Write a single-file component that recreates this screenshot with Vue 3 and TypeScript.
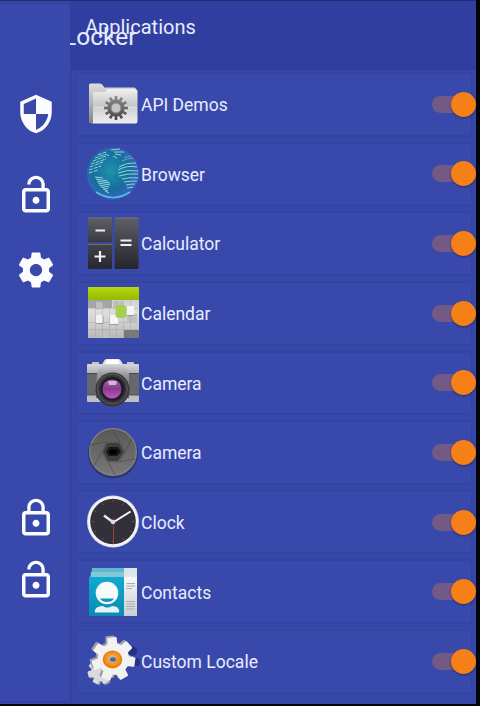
<template>
  <div class="screen">
    <aside class="drawer">
      <div class="drawer-group">
        <svg v-for="(icon, i) in topIcons" :key="i" class="drawer-icon" :class="icon.name" viewBox="0 0 24 24">
          <path :d="icon.path" />
        </svg>
      </div>
      <div class="drawer-group drawer-group-bottom">
        <svg v-for="(icon, i) in bottomIcons" :key="i" class="drawer-icon" :class="icon.name" viewBox="0 0 24 24">
          <path :d="icon.path" />
        </svg>
      </div>
    </aside>

    <main class="content">
      <header class="toolbar">
        <span class="title">Locker</span>
        <span class="subtitle">Applications</span>
      </header>

      <ul class="app-list">
        <li v-for="app in apps" :key="app.icon" class="app-row">
          <div class="card">
            <svg class="app-icon" viewBox="0 0 54 54">
              <g v-if="app.icon === 'folder'">
                <path d="M3 46V8q0-1.500 1.500-1.500H14q1.500 0 2.500 1.500l2 2.500H48q2 0 2 2V46Z" fill="url(#folderBack)" />
                <path d="M7 46V17q0-2 2-2h9q2 0 3-2l1-1h27q2.500 0 2.500 2.500V44.500q0 2-2 2H5Z" fill="url(#folderFront)" />
                <path d="M8 30.500H51" stroke="#fff" stroke-opacity=".35" />
                <path :d="gearPath(30, 31, 12, 8.5, 12)" fill="url(#darkGear)" />
                <circle cx="30" cy="31" r="5" fill="#c4c4c4" stroke="#888" />
              </g>

              <g v-else-if="app.icon === 'globe'">
                <circle cx="27" cy="26.500" r="26" fill="url(#globe)" />
                <g fill="none" stroke="#a9e0e8" stroke-width="1" stroke-opacity=".85">
                  <path d="M12 8l8-3M9 11l12-4M7 14l16-6M5 17l15-5M4 20l13-5M3 23l12-4M3 26l9-3" stroke-dasharray="4 1" />
                  <path d="M25 3l9-1M28 5l10 0M29 7l6 1M27 9l4 2" />
                  <path d="M33 20q8-5 17-4M32 23q9-5 19-3M32 26q9-4 20-2M33 29q9-3 19-2M36 32q8-2 16-1M38 35q6-1 13-1M40 38q5-1 9-1M41 41l6-1" />
                  <path d="M9 30l8 1M10 32l12 2M11 34l13 2M12 36l12 2M13 38l10 2M15 40l7 2M17 42l5 2M19 44l4 2" />
                  <path d="M36 14q6-3 11-3M38 11q4-2 7-2" stroke-opacity=".5" />
                </g>
                <path d="M10 45Q27 56 44 45" fill="none" stroke="#58bce8" stroke-width="1.500" />
              </g>

              <g v-else-if="app.icon === 'calculator'">
                <rect x="2" y=".5" width="24" height="25" rx="1" fill="url(#keyLight)" />
                <rect x="2" y="27" width="24" height="25" rx="1" fill="url(#keyDark)" />
                <rect x="28.500" y=".5" width="24" height="51.500" rx="1" fill="url(#keyTall)" />
                <path d="M2.500 1H25.500M2.500 27.500H25.500M29 1H52" stroke="#77777f" stroke-width=".8" />
                <path d="M9.500 13.500H19M8.500 39.500H19.500M14 34V45M34.500 23.500H45.500M34.500 28H45.500" stroke="#f1f1f1" stroke-width="2.200" />
              </g>

              <g v-else-if="app.icon === 'calendar'">
                <rect x="2" y="1" width="51" height="51" fill="url(#calendarPage)" />
                <path d="M2 14H26V22H2Z" fill="#a6a6a8" />
                <path d="M10 16h7v7h-7zM27 15h10v7H27zM41 28h10v8H41zM15 43h8v9h-8z" fill="#bfc0c0" />
                <path d="M38 44H53V52H38Z" fill="#777979" />
                <path d="M9.500 14V51M16.500 14V51M23.500 14V51M30.500 14V51M37.500 14V51M44.500 14V51M2 22.500H52M2 36.500H52M2 43.500H52" stroke="#8d8e8e" stroke-opacity=".4" stroke-width=".7" />
                <rect x="10" y="29" width="7" height="8" fill="#f3f4f2" />
                <path d="M24 29H32V38H24ZM41 20H48V29H41Z" fill="#f5f6f3" />
                <path d="M10 37.500h7v-8M24 38.500h8M41 29.500h7" fill="none" stroke="#8b8c8b" stroke-width=".8" />
                <rect x="29.500" y="19" width="11" height="13" rx="3" fill="#a5d052" />
                <rect x="2" y="1" width="51" height="13" fill="url(#calendarTop)" />
              </g>

              <g v-else-if="app.icon === 'camera'">
                <path d="M6 9V6h7v3M41 9V6h7v3" fill="#c6c6ca" />
                <rect x="1" y="8" width="52" height="38" rx="1" fill="url(#silver)" />
                <rect x="1" y="17" width="52" height="22" fill="#66666b" />
                <path d="M1 17.500H53M1 39H53" stroke="#3d3d42" stroke-width=".7" />
                <path d="M11 17L18 5q1-2 3-2H32q2 0 3 2L43 17V42H10Z" fill="url(#prism)" />
                <path d="M19 8L21 4H32L34 8Z" fill="#fff" />
                <ellipse cx="26.500" cy="33.500" rx="17" ry="17" fill="#37363b" />
                <circle cx="26.500" cy="33" r="15" fill="none" stroke="#5f5d62" stroke-width="1" />
                <circle cx="26.500" cy="33" r="12" fill="#1f1b25" />
                <circle cx="26" cy="33" r="9.500" fill="url(#lens)" />
                <path d="M22 25H31L30 29H23Z" fill="#e5c2e9" opacity=".85" />
              </g>

              <g v-else-if="app.icon === 'shutter'">
                <circle cx="27" cy="27.500" r="25" fill="#282c50" opacity=".65" />
                <circle cx="27" cy="26" r="24" fill="#838483" />
                <circle cx="27" cy="26" r="22.800" fill="url(#shutter)" />
                <path d="M20 16L34 16L39 26L33 36H22L16 26ZM20 16L4 19M34 16L26 3M39 26L46 12M33 36L49 33M22 36L29 49M16 26L8 40" fill="none" stroke="#4b4b4b" stroke-width=".7" />
                <path d="M21 17H33L38 26L32 35H22L17 26Z" fill="#3e3e3e" />
                <path d="M23 21H32L35 26L31 30H23L20 26Z" fill="#161616" />
                <ellipse cx="27" cy="26" rx="4" ry="2.500" fill="#000" />
              </g>

              <g v-else-if="app.icon === 'clock'">
                <circle cx="27" cy="26.500" r="26" fill="#dadfe9" />
                <circle cx="27" cy="26.500" r="25" fill="#f4f5fc" />
                <circle cx="27" cy="26.500" r="22.800" fill="#343039" />
                <path d="M27 5v2M27 46v2M6 26.500h2M46 26.500h2M16.500 8.500l1 1.700M8.500 16l1.700 1M8.500 37l1.700-1M16.500 44.500l1-1.700M37.500 44.500l-1-1.700M45.500 37l-1.700-1M37.500 8.500l-1 1.700" stroke="#68636b" stroke-width=".8" />
                <path d="M27.500 23V49" stroke="#9b4036" stroke-width="1" />
                <path d="M27 27.500L44.500 16.500" stroke="#fff" stroke-width="2" />
                <path d="M27.500 27.500L18 20.500" stroke="#e7e7e9" stroke-width="2.600" />
                <circle cx="27" cy="27" r="2.300" fill="#d9d9db" />
              </g>

              <g v-else-if="app.icon === 'contacts'">
                <path d="M6 3H51V12H5Z" fill="#5cb9d1" />
                <path d="M38 3H51V12H38Z" fill="#d7e4e8" />
                <path d="M5 7H51V15H4Z" fill="#83c8d8" />
                <path d="M38 7H51V15H38Z" fill="#e1e7e8" />
                <path d="M3 12H38V51H3Z" fill="url(#contactBlue)" />
                <path d="M38 12H51V51H38Z" fill="url(#contactPaper)" />
                <path d="M9 47.500Q8 41 17 41Q21 44 26 41Q34 41 33 47.500Z" fill="#e5f3f3" />
                <circle cx="21" cy="28" r="11.300" fill="#f5fafa" />
                <path d="M14 33.500H28Q26 37 21 37Q16 37 14 33.500Z" fill="#1398bd" />
                <path d="M40.500 18.500H49M40.500 21H49M40.500 23.500H46M40.500 36.500H49M40.500 39H49M40.500 41.500H49M40.500 44H49" stroke="#a5adb0" stroke-width="1" />
              </g>

              <g v-else>
                <ellipse cx="46" cy="17" rx="5" ry="5" fill="#202b70" opacity=".75" />
                <ellipse cx="51" cy="28" rx="3" ry="4" fill="#202b70" opacity=".75" />
                <g stroke-width="2" stroke-linejoin="round">
                  <path :d="gearPath(16, 38.5, 12, 8.5, 7, 0.2)" fill="#8f929b" stroke="#8f929b" />
                  <path :d="gearPath(14.5, 37.5, 12, 8.5, 7, 0.2)" fill="#dadadc" stroke="#dadadc" />
                  <path :d="gearPath(25.5, 23.5, 21, 15, 7, 0.15)" fill="#9c9ea6" stroke="#9c9ea6" />
                  <path :d="gearPath(27.5, 25, 21, 15, 7, 0.15)" fill="#f2f2f2" stroke="#f2f2f2" />
                </g>
                <ellipse cx="26.500" cy="25.500" rx="9.800" ry="9" fill="#ea7d0c" />
                <ellipse cx="26.500" cy="25" rx="8" ry="7" fill="#f4951d" />
                <ellipse cx="26.500" cy="25" rx="4.500" ry="4" fill="#c9b6a5" />
                <ellipse cx="27" cy="25.500" rx="3" ry="2.200" fill="#59648f" />
              </g>
            </svg>
            <span class="app-name">{{ app.name }}</span>
            <button class="switch" type="button" role="switch" :aria-checked="app.locked" :aria-label="app.name" :class="{ on: app.locked }" @click="app.locked = !app.locked">
              <span class="thumb" />
            </button>
          </div>
        </li>
      </ul>
    </main>

    <!-- Shared gradients for the launcher icons -->
    <svg class="defs" width="0" height="0">
      <defs>
        <linearGradient id="folderBack" x2="0" y2="1"><stop stop-color="#dedede" /><stop offset="1" stop-color="#858585" /></linearGradient>
        <linearGradient id="folderFront" x2="0" y2="1"><stop stop-color="#f0f0f0" /><stop offset=".45" stop-color="#c9c9c9" /><stop offset="1" stop-color="#eeeeee" /></linearGradient>
        <linearGradient id="darkGear" x2="0" y2="1"><stop stop-color="#8d8d8d" /><stop offset="1" stop-color="#454545" /></linearGradient>
        <radialGradient id="globe" cx=".45" cy=".45"><stop stop-color="#1d93ac" /><stop offset=".7" stop-color="#176f9b" /><stop offset="1" stop-color="#2e68b5" /></radialGradient>
        <linearGradient id="keyLight" x2="0" y2="1"><stop stop-color="#5f5f67" /><stop offset="1" stop-color="#393a40" /></linearGradient>
        <linearGradient id="keyDark" x2="0" y2="1"><stop stop-color="#43444a" /><stop offset="1" stop-color="#27282f" /></linearGradient>
        <linearGradient id="keyTall" x2="0" y2="1"><stop stop-color="#5f5f67" /><stop offset="1" stop-color="#25262d" /></linearGradient>
        <linearGradient id="calendarPage" x2="0" y2="1"><stop stop-color="#c3c4c5" /><stop offset=".5" stop-color="#dedfdd" /><stop offset="1" stop-color="#b8b9b8" /></linearGradient>
        <linearGradient id="calendarTop" x2="0" y2="1"><stop stop-color="#b8d80c" /><stop offset="1" stop-color="#94b900" /></linearGradient>
        <linearGradient id="silver" x2="0" y2="1"><stop stop-color="#d8d8dc" /><stop offset=".3" stop-color="#a5a5aa" /><stop offset="1" stop-color="#c1c1c5" /></linearGradient>
        <linearGradient id="prism" x2="0" y2="1"><stop stop-color="#f4f4f8" /><stop offset=".4" stop-color="#98989d" /><stop offset="1" stop-color="#5a5a5e" /></linearGradient>
        <linearGradient id="lens" x2="0" y2="1"><stop stop-color="#a463ac" /><stop offset=".5" stop-color="#893b91" /><stop offset="1" stop-color="#c258c1" /></linearGradient>
        <linearGradient id="shutter" x2="0" y2="1"><stop stop-color="#585957" /><stop offset="1" stop-color="#777877" /></linearGradient>
        <linearGradient id="contactBlue" x2="0" y2="1"><stop stop-color="#12a9cf" /><stop offset="1" stop-color="#078bb3" /></linearGradient>
        <linearGradient id="contactPaper" x2="0" y2="1"><stop stop-color="#f7f7f7" /><stop offset="1" stop-color="#c8ced2" /></linearGradient>
      </defs>
    </svg>
  </div>
</template>

<script setup lang="ts">
import { ref } from 'vue'

interface AppItem {
  name: string
  icon: string
  locked: boolean
}

interface DrawerIcon {
  name: string
  path: string
}

const lockOpen = 'M12 17c1.100 0 2-.9 2-2s-.9-2-2-2-2 .9-2 2 .9 2 2 2zm6-9h-1V6c0-2.760-2.240-5-5-5S7 3.240 7 6h1.900c0-1.710 1.390-3.100 3.100-3.100 1.710 0 3.100 1.390 3.100 3.100v2H6c-1.100 0-2 .9-2 2v10c0 1.100.9 2 2 2h12c1.100 0 2-.9 2-2V10c0-1.100-.9-2-2-2zm0 12H6V10h12v10z'

const topIcons: DrawerIcon[] = [
  { name: 'shield', path: 'M12 1L3 5v6c0 5.550 3.840 10.740 9 12 5.160-1.260 9-6.450 9-12V5l-9-4zm0 10.990h7c-.53 4.120-3.280 7.790-7 8.940V12H5V6.300l7-3.110v8.800z' },
  { name: 'lock-open', path: lockOpen },
  { name: 'settings', path: 'M19.430 12.980c.04-.32.07-.64.07-.98s-.03-.66-.07-.98l2.110-1.650c.19-.15.24-.42.12-.64l-2-3.460c-.12-.22-.39-.3-.61-.22l-2.490 1c-.52-.4-1.080-.73-1.690-.98l-.38-2.650C14.460 2.180 14.250 2 14 2h-4c-.25 0-.46.18-.49.42l-.38 2.650c-.61.25-1.170.59-1.690.98l-2.490-1c-.23-.09-.49 0-.61.22l-2 3.460c-.13.22-.07.49.12.64l2.110 1.650c-.04.32-.07.65-.07.98s.03.66.07.98l-2.110 1.650c-.19.15-.24.42-.12.64l2 3.460c.12.22.39.3.61.22l2.490-1c.52.4 1.080.73 1.690.98l.38 2.650c.03.24.24.42.49.42h4c.25 0 .46-.18.49-.42l.38-2.650c.61-.25 1.170-.59 1.690-.98l2.490 1c.23.09.49 0 .61-.22l2-3.460c.12-.22.07-.49-.12-.64l-2.110-1.650zM12 15.500c-1.930 0-3.500-1.570-3.500-3.500s1.570-3.500 3.500-3.500 3.500 1.570 3.500 3.500-1.570 3.500-3.500 3.500z' },
]

const bottomIcons: DrawerIcon[] = [
  { name: 'lock', path: 'M12 17c1.100 0 2-.9 2-2s-.9-2-2-2-2 .9-2 2 .9 2 2 2zm6-9h-1V6c0-2.760-2.240-5-5-5S7 3.240 7 6v2H6c-1.100 0-2 .9-2 2v10c0 1.100.9 2 2 2h12c1.100 0 2-.9 2-2V10c0-1.100-.9-2-2-2zM8.900 6c0-1.710 1.390-3.100 3.100-3.100s3.100 1.390 3.100 3.100v2H8.900V6zM18 20H6V10h12v10z' },
  { name: 'unlock', path: lockOpen },
]

const apps = ref<AppItem[]>([
  { name: 'API Demos', icon: 'folder', locked: true },
  { name: 'Browser', icon: 'globe', locked: true },
  { name: 'Calculator', icon: 'calculator', locked: true },
  { name: 'Calendar', icon: 'calendar', locked: true },
  { name: 'Camera', icon: 'camera', locked: true },
  { name: 'Camera', icon: 'shutter', locked: true },
  { name: 'Clock', icon: 'clock', locked: true },
  { name: 'Contacts', icon: 'contacts', locked: true },
  { name: 'Custom Locale', icon: 'locale', locked: true },
])

// Cog outline: every tooth is a trapezoid between the inner and outer radius
function gearPath(cx: number, cy: number, outer: number, inner: number, teeth: number, turn = 0): string {
  const step = (Math.PI * 2) / teeth
  const points: string[] = []
  for (let i = 0; i < teeth; i++) {
    const a = i * step + turn
    for (const [offset, r] of [[-0.3, inner], [-0.2, outer], [0.2, outer], [0.3, inner]]) {
      const angle = a + offset * step
      points.push(`${(cx + Math.cos(angle) * r).toFixed(2)} ${(cy + Math.sin(angle) * r).toFixed(2)}`)
    }
  }
  return `M${points.join('L')}Z`
}
</script>

<style>
body {
  background: #03030a;
}
</style>

<style scoped>
.screen {
  display: flex;
  box-sizing: border-box;
  width: 476px;
  height: 704px;
  border-top: 1px solid #202d72;
  overflow: hidden;
  background: #3747a8;
  color: #e9ecff;
  font-family: Roboto, sans-serif;
}

/* ── Drawer ── */
.drawer {
  display: flex;
  flex-direction: column;
  justify-content: space-between;
  box-sizing: border-box;
  flex: 0 0 70px;
  height: 697px;
  margin-top: 3px;
  padding: 89px 0 100px 1px;
  background: #3949ab;
  box-shadow: 0 0 3px rgba(20, 30, 100, 0.3);
}
.drawer-group {
  display: flex;
  flex-direction: column;
  align-items: center;
  gap: 39px;
}
.drawer-group-bottom {
  gap: 20px;
}
.drawer-icon {
  width: 42px;
  height: 42px;
  fill: #fafcff;
}
.settings {
  margin-top: -6px;
}

/* ── Toolbar ── */
.content {
  flex: 1;
  min-width: 0;
}
.toolbar {
  display: grid;
  height: 69px;
  overflow: hidden;
  background: #303f9f;
}
.title,
.subtitle {
  grid-area: 1 / 1;
  white-space: nowrap;
}
.title {
  margin: 21px 0 0 -7px;
  font-size: 24.5px;
  line-height: 30px;
}
.subtitle {
  padding: 14px 0 0 15px;
  font-size: 20px;
  line-height: 24px;
}

/* ── App list ── */
.app-list {
  margin: 0;
  padding: 0;
  list-style: none;
}
.app-row {
  box-sizing: border-box;
  height: 69.65px;
  padding: 4px 0 5px 7px;
}
.card {
  display: flex;
  align-items: center;
  height: 100%;
  margin-right: 5px;
  background: #3949ab;
  box-shadow: 0 0 2px rgba(25, 35, 110, 0.3);
}
.app-icon {
  flex: none;
  width: 54px;
  height: 54px;
  margin-left: 9px;
}
.app-name {
  flex: 1;
  margin-left: 1px;
  padding-top: 1.5px;
  font-size: 17.5px;
  line-height: 24px;
}

/* ── Switch ── */
.switch {
  display: flex;
  align-items: center;
  flex: none;
  width: 40px;
  height: 17px;
  padding: 0;
  border: 0;
  border-radius: 9px;
  background: #5967b5;
}
.switch.on {
  justify-content: flex-end;
  margin-right: -1px;
  background: #735985;
}
.thumb {
  flex: none;
  width: 25px;
  height: 25px;
  margin-right: -4px;
  border-radius: 50%;
  background: #f58018;
  box-shadow: 0 1px 2px rgba(30, 25, 70, 0.6);
}
.defs {
  flex: none;
}
</style>
